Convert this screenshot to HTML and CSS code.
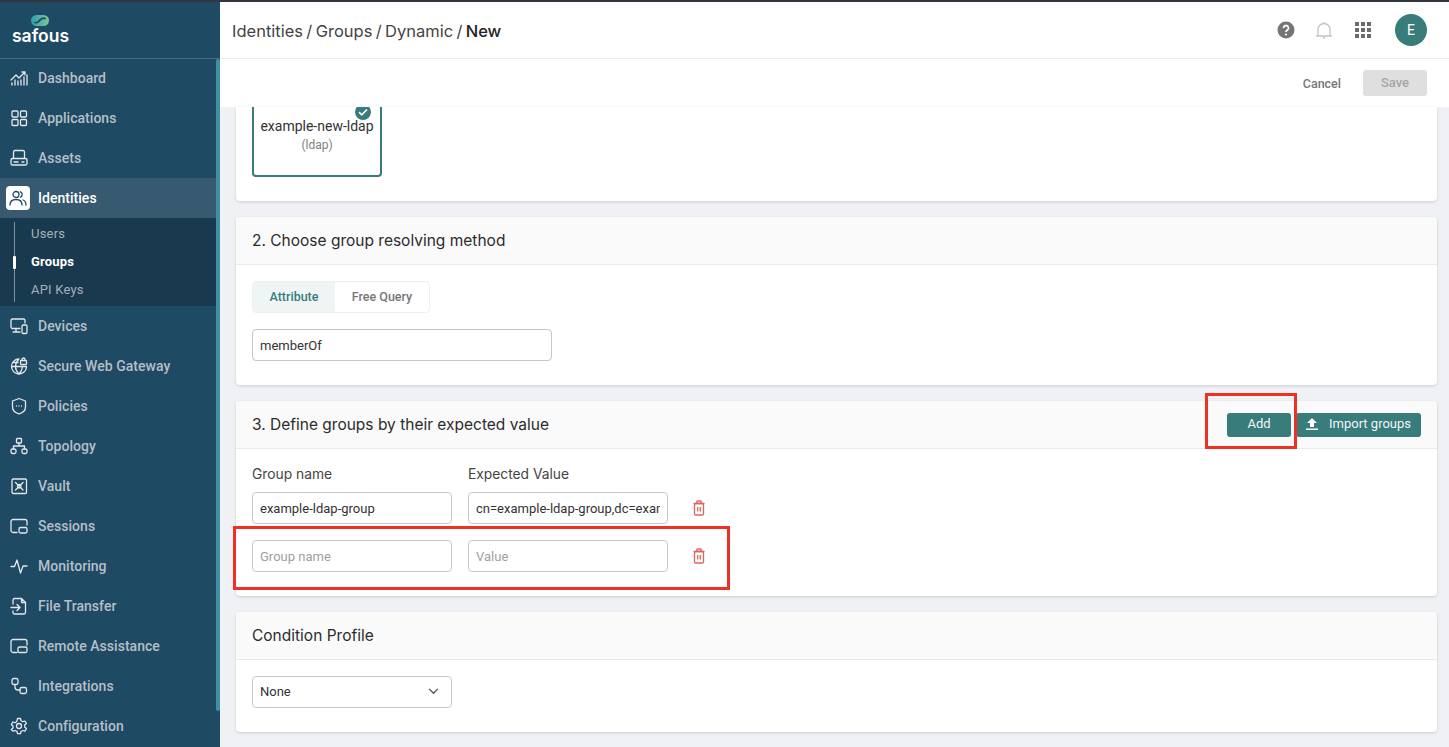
FILE: index.html
```html
<!DOCTYPE html>
<html>
<head>
<title>Identities / Groups / Dynamic / New</title>
<link rel="stylesheet" href="styles.css">
</head>
<body>

<div class="app">
  <aside class="sidebar">
    <div class="logo">
      <svg class="logo-mark" viewBox="0 0 18 11" width="18" height="11">
        <defs>
          <linearGradient id="logo-fill" x1="0" x2="1" y1="0" y2="0">
            <stop offset="0" stop-color="#2f9cb5"/>
            <stop offset="1" stop-color="#7fc88f"/>
          </linearGradient>
        </defs>
        <rect width="18" height="11" rx="5.500" fill="url(#logo-fill)"/>
        <path d="M4 7.500C6.500 8.500 7.500 6.500 9 5S12 2.500 14 3.500" fill="none" stroke="#1f4a63" stroke-width="1.800" stroke-linecap="round"/>
      </svg>
      <span class="logo-text">safous</span>
    </div>
    <div class="nav-wrap">
      <nav class="nav">
        <a class="nav-item">
          <svg class="nav-icon" viewBox="0 0 18 18"><path d="M1 11 6 6l3 3 6-6M15 3h-3M15 3v3M2 16v-2M5 16v-5M8 16v-4M11 16v-5M14 16V8M17 16V6"/></svg>
          Dashboard
        </a>
        <a class="nav-item">
          <svg class="nav-icon" viewBox="0 0 18 18"><rect x="2" y="2" width="6" height="6" rx="1"/><rect x="10.500" y="2" width="6" height="6" rx="1"/><rect x="2" y="10.500" width="6" height="6" rx="1"/><rect x="10.500" y="10.500" width="6" height="6" rx="1"/></svg>
          Applications
        </a>
        <a class="nav-item">
          <svg class="nav-icon" viewBox="0 0 18 18"><path d="M3.500 9V3a1.500 1.500 0 0 1 1.500-1.500h8A1.500 1.500 0 0 1 14.500 3v6"/><rect x="1" y="9.500" width="16" height="6.500" rx="1.500"/><path d="M4 13h4M12 13h2"/></svg>
          Assets
        </a>
        <a class="nav-item active">
          <span class="icon-box">
            <svg class="nav-icon" viewBox="0 0 18 18"><circle cx="7" cy="5.500" r="3"/><path d="M1 16c0-3.500 2.500-5.500 6-5.500s6 2 6 5.500M11.500 2.800a3 3 0 0 1 0 5.400M14 11c2 .6 3 2.500 3 5"/></svg>
          </span>
          Identities
        </a>
        <div class="subnav">
          <a class="sub-item">Users</a>
          <a class="sub-item current">Groups</a>
          <a class="sub-item">API Keys</a>
        </div>
        <a class="nav-item">
          <svg class="nav-icon" viewBox="0 0 18 18"><path d="M10 11.500H2.500A1.500 1.500 0 0 1 1 10V3.500A1.500 1.500 0 0 1 2.500 2h11A1.500 1.500 0 0 1 15 3.500V6M3 15h7M6 11.500V15"/><rect x="12" y="8" width="5" height="8.500" rx="1.200"/></svg>
          Devices
        </a>
        <a class="nav-item">
          <svg class="nav-icon" viewBox="0 0 18 18"><path d="M9 2a7.500 7.500 0 1 0 7.500 8M1.500 9.500h15M9 2C6.500 4.500 5.500 7 5.500 9.500S6.500 14.500 9 17c2-2 3.200-4.500 3.400-7M2.500 5.500H8"/><rect x="10.500" y="3.500" width="6" height="4" rx=".8"/><path d="M12 3.500V2.500a1.500 1.500 0 0 1 3 0v1"/></svg>
          Secure Web Gateway
        </a>
        <a class="nav-item">
          <svg class="nav-icon" viewBox="0 0 18 18"><path d="M9 1.500 15.500 4v6c0 3.500-3 5.800-6.500 6.800C5.500 15.800 2.500 13.500 2.500 10V4Z"/><path d="M6.500 9h.01M9 9h.01M11.500 9h.01"/></svg>
          Policies
        </a>
        <a class="nav-item">
          <svg class="nav-icon" viewBox="0 0 18 18"><rect x="6.500" y="1.500" width="5" height="4.500" rx=".8"/><rect x="1" y="12" width="5" height="4.500" rx="1.500"/><rect x="12" y="12" width="5" height="4.500" rx="1.500"/><path d="M9 6v3M3.500 12V9h11v3"/></svg>
          Topology
        </a>
        <a class="nav-item">
          <svg class="nav-icon" viewBox="0 0 18 18"><rect x="2" y="2" width="14.500" height="14.500" rx="1.200"/><path d="m5.500 5.500 7.500 7.500M13 5.500 5.500 13"/><circle cx="9.250" cy="9.250" r="1.800"/></svg>
          Vault
        </a>
        <a class="nav-item">
          <svg class="nav-icon" viewBox="0 0 18 18"><path d="M7 15.500H3A2 2 0 0 1 1 13.500V4.500A2 2 0 0 1 3 2.500h12A2 2 0 0 1 17 4.500V8"/><rect x="9" y="10.500" width="8" height="5.500" rx="1.500"/></svg>
          Sessions
        </a>
        <a class="nav-item">
          <svg class="nav-icon" viewBox="0 0 18 18"><path d="M1 9.500h3.500L7 3l3.500 13 2.500-7h4"/></svg>
          Monitoring
        </a>
        <a class="nav-item">
          <svg class="nav-icon" viewBox="0 0 18 18"><path d="M3 7V3a1.500 1.500 0 0 1 1.500-1.500h7L15.500 5.500v10A1.500 1.500 0 0 1 14 17H4.500A1.500 1.500 0 0 1 3 15.500V14M11.500 1.500v4h4M1 10.500h9M7 7.500l3 3-3 3"/></svg>
          File Transfer
        </a>
        <a class="nav-item">
          <svg class="nav-icon" viewBox="0 0 18 18"><path d="M7 15.500H3A2 2 0 0 1 1 13.500V4.500A2 2 0 0 1 3 2.500h12A2 2 0 0 1 17 4.500V8"/><rect x="8" y="10" width="9" height="5.500" rx="1.500"/></svg>
          Remote Assistance
        </a>
        <a class="nav-item">
          <svg class="nav-icon" viewBox="0 0 18 18"><rect x="2" y="1.500" width="6" height="6" rx="1.800"/><rect x="10" y="10.500" width="6.500" height="6" rx="1.800"/><path d="M5 7.500V10a3 3 0 0 0 3 3h2"/></svg>
          Integrations
        </a>
        <a class="nav-item">
          <svg class="nav-icon" viewBox="0 0 18 18"><circle cx="9" cy="9" r="2.500"/><path d="M7.500 1.500h3l.5 2.200 1.700 1 2.200-.7 1.500 2.600-1.700 1.500v2l1.700 1.500-1.500 2.600-2.200-.7-1.700 1-.5 2.200h-3l-.5-2.200-1.700-1-2.200.7L1.300 12.600 3 11.100v-2L1.300 7.600l1.500-2.600 2.200.7 1.700-1Z"/></svg>
          Configuration
        </a>
      </nav>
      <div class="nav-scroll"></div>
    </div>
  </aside>

  <div class="main">
    <header class="topbar">
      <div class="crumbs">Identities / Groups / Dynamic / <b>New</b></div>
      <div class="top-icons">
        <svg class="help" viewBox="0 0 18 18" width="18" height="18"><circle cx="9" cy="9" r="8.500" fill="#757575"/><path d="M6.500 7a2.500 2.500 0 1 1 3.900 2.100C9.500 9.700 9 10.100 9 11" fill="none" stroke="#fff" stroke-width="1.800"/><circle cx="9" cy="13.500" r="1.100" fill="#fff"/></svg>
        <svg class="bell" viewBox="0 0 16 18" width="16" height="18"><path d="M2 14V8.500a6 6 0 0 1 12 0V14l1 1H1ZM8 1v1.500" fill="none" stroke="#c4c4c4" stroke-width="1.300"/><circle cx="8" cy="16.800" r="1.100" fill="#c4c4c4"/></svg>
        <div class="apps">
          <i></i><i></i><i></i><i></i><i></i><i></i><i></i><i></i><i></i>
        </div>
        <div class="avatar">E</div>
      </div>
    </header>

    <div class="actions">
      <button class="btn-cancel">Cancel</button>
      <button class="btn-save">Save</button>
    </div>

    <div class="content">
      <section class="card card-clipped">
        <div class="tile">
          <svg class="tile-check" viewBox="0 0 16 16" width="16" height="16"><circle cx="8" cy="8" r="8" fill="#387c7c"/><path d="m4 8.200 2.800 2.600L12 5.500" fill="none" stroke="#fff" stroke-width="1.600"/></svg>
          <div class="tile-name">example-new-ldap</div>
          <div class="tile-type">(ldap)</div>
        </div>
      </section>

      <section class="card">
        <div class="card-head">
          <h3>2. Choose group resolving method</h3>
        </div>
        <div class="card-body">
          <div class="tabs">
            <span class="tab on">Attribute</span>
            <span class="tab">Free Query</span>
          </div>
          <input type="text" class="field wide" value="memberOf">
        </div>
      </section>

      <section class="card">
        <div class="card-head">
          <h3>3. Define groups by their expected value</h3>
          <div class="head-btns">
            <button class="btn-teal add">Add</button>
            <button class="btn-teal import">
              <svg viewBox="0 0 12 12" width="12" height="12"><path d="M6 0 11 5H8v4H4V5H1ZM0 10.500h12V12H0Z" fill="#fff"/></svg>
              Import groups
            </button>
          </div>
        </div>
        <div class="card-body groups">
          <label class="col-label">Group name</label>
          <label class="col-label">Expected Value</label>
          <span></span>
          <input type="text" class="field" value="example-ldap-group">
          <input type="text" class="field" value="cn=example-ldap-group,dc=example,dc=com">
          <svg class="trash" viewBox="0 0 14 16" width="14" height="16"><path d="M1.500 3.500h11M4.800 3.500V1.800a.8.800 0 0 1 .8-.8h2.800a.8.800 0 0 1 .8.8v1.700"/><rect x="2.500" y="3.500" width="9" height="11.500" rx="1.300"/><path d="M5.700 7v4.500M8.300 7v4.500"/></svg>
          <input type="text" class="field" placeholder="Group name">
          <input type="text" class="field" placeholder="Value">
          <svg class="trash" viewBox="0 0 14 16" width="14" height="16"><path d="M1.500 3.500h11M4.800 3.500V1.800a.8.800 0 0 1 .8-.8h2.800a.8.800 0 0 1 .8.8v1.700"/><rect x="2.500" y="3.500" width="9" height="11.500" rx="1.300"/><path d="M5.700 7v4.500M8.300 7v4.500"/></svg>
        </div>
      </section>

      <section class="card">
        <div class="card-head">
          <h3>Condition Profile</h3>
        </div>
        <div class="card-body">
          <div class="field select">
            None
            <svg viewBox="0 0 12 8" width="11" height="7"><path d="m1 1 5 5 5-5" fill="none" stroke="#555" stroke-width="1.500"/></svg>
          </div>
        </div>
      </section>
    </div>
  </div>

  <div class="mark mark-add"></div>
  <div class="mark mark-row"></div>
</div>

</body>
</html>
```

FILE: styles.css
```css
* {
  box-sizing: border-box;
}

html, body {
  margin: 0;
  height: 100%;
  overflow: hidden;
}

body {
  font-family: Roboto, "Liberation Sans", sans-serif;
  color: #333;
}

.app {
  position: relative;
  display: flex;
  height: 747px;
  border-top: 2px solid #33363f;
}

/* sidebar */
.sidebar {
  width: 220px;
  flex: none;
  background: #1f4a63;
}

.logo {
  height: 56px;
  width: 220px;
  padding-top: 13px;
  display: flex;
  flex-direction: column;
  align-items: flex-start;
  color: #fff;
}

.logo-mark {
  margin-left: 31px;
}

.logo-text {
  margin: 0 0 0 12px;
  font-family: Inter, sans-serif;
  font-weight: 600;
  font-size: 17.500px;
  line-height: 20px;
}

.nav-wrap {
  display: flex;
  box-shadow: inset 0 1px #4b6c80;
}

.nav {
  width: 216px;
}

.nav-scroll {
  width: 4px;
  height: 652px;
  margin-top: 1px;
  background: #3f8fa5;
  border-radius: 2px;
}

.nav-item {
  display: flex;
  align-items: center;
  height: 40px;
  padding-left: 10px;
  font-size: 14px;
  font-weight: 500;
  letter-spacing: 0.03px;
  color: #b5bfc6;
}

.nav-icon {
  width: 18px;
  height: 18px;
  margin-right: 10px;
  flex: none;
  fill: none;
  stroke: #e3e8eb;
  stroke-width: 1.300;
  stroke-linecap: round;
  stroke-linejoin: round;
}

.nav-item.active {
  background: #375a70;
  color: #fff;
  padding-left: 6px;
}

.icon-box {
  width: 24px;
  height: 24px;
  margin-right: 8px;
  background: #fff;
  border-radius: 4px;
  display: flex;
  align-items: center;
  justify-content: center;
}

.icon-box .nav-icon {
  margin: 0;
  stroke: #1f4a63;
}

.subnav {
  height: 88px;
  padding: 2px 0 2px 31px;
  background: #19394f;
  position: relative;
}

.subnav::before {
  content: "";
  position: absolute;
  left: 14px;
  top: 4px;
  bottom: 4px;
  width: 1px;
  background: #7d919e;
}

.sub-item {
  display: block;
  height: 28px;
  line-height: 28px;
  font-size: 13px;
  letter-spacing: 0.2px;
  color: #a5b1ba;
  position: relative;
}

.sub-item.current {
  color: #fff;
  font-weight: 700;
}

.sub-item.current::before {
  content: "";
  position: absolute;
  left: -18px;
  top: 8px;
  width: 3px;
  height: 13px;
  background: #fff;
  border-radius: 1px;
}

/* main */
.main {
  flex: 1;
  min-width: 0;
  display: flex;
  flex-direction: column;
  background: #eff1f5;
}

.topbar {
  height: 57px;
  flex: none;
  background: #fff;
  border-bottom: 1px solid #eceaf8;
  display: flex;
  align-items: center;
  justify-content: space-between;
  padding: 0 22px 0 12px;
}

.crumbs {
  padding-top: 1px;
  font-family: Inter, sans-serif;
  font-size: 16.500px;
  word-spacing: -1.300px;
  color: #444;
}

.crumbs b {
  font-weight: 500;
  color: #222;
}

.top-icons {
  display: flex;
  align-items: center;
}

.help {
  margin-right: 21px;
}

.bell {
  margin-right: 23px;
}

.apps {
  display: grid;
  grid-template-columns: repeat(3, 4px);
  grid-auto-rows: 4px;
  gap: 2px;
  width: 16px;
  margin-right: 24px;
}

.apps i {
  background: #6b6b6b;
}

.avatar {
  width: 32px;
  height: 32px;
  border-radius: 50%;
  background: #387c7c;
  color: #fff;
  font-size: 14px;
  display: flex;
  align-items: center;
  justify-content: center;
}

.actions {
  height: 48px;
  flex: none;
  background: #fff;
  display: flex;
  align-items: center;
  justify-content: flex-end;
  padding: 0 22px 0 0;
}

.actions button {
  border: 0;
  font-family: inherit;
  font-weight: 500;
}

.btn-cancel {
  background: none;
  color: #777;
  font-size: 12.500px;
  margin-right: 22px;
  padding: 0;
}

.btn-save {
  width: 64px;
  height: 26px;
  padding: 0 0 2px;
  background: #dfdfdf;
  color: #a6a6a6;
  font-size: 13px;
  border-radius: 3px;
}

.content {
  padding: 0 12px 0 16px;
  display: flex;
  flex-direction: column;
  gap: 16px;
}

.card {
  background: #fff;
  border-radius: 4px;
  box-shadow: 0 1px 3px rgba(0, 0, 0, 0.15);
}

.card-clipped {
  height: 94px;
  flex: none;
  border-radius: 0 0 4px 4px;
  padding-left: 16px;
  overflow: hidden;
}

.tile {
  position: relative;
  width: 130px;
  height: 70px;
  border: 2px solid #387c7c;
  border-top: 0;
  border-radius: 0 0 4px 4px;
  text-align: center;
  padding-top: 11px;
}

.tile-check {
  position: absolute;
  top: -3px;
  right: 9px;
}

.tile-name {
  font-size: 14px;
  line-height: 16px;
  color: #333;
}

.tile-type {
  font-size: 12px;
  line-height: 14px;
  margin-top: 4px;
  color: #808080;
}

.card-head {
  height: 48px;
  padding: 0 16px;
  background: #fafafa;
  border-bottom: 1px solid #e6ebeb;
  border-radius: 4px 4px 0 0;
  display: flex;
  align-items: center;
  justify-content: space-between;
}

.card-head h3 {
  margin: 0;
  font-family: Inter, sans-serif;
  font-weight: 400;
  font-size: 15.500px;
  color: #2c2c2c;
}

.card-body {
  padding: 16px 16px 24px;
}

.tabs {
  display: inline-flex;
  height: 32px;
  margin-bottom: 16px;
  vertical-align: top;
  border: 1px solid #eef0f1;
  border-radius: 4px;
  font-size: 12.500px;
  font-weight: 500;
  color: #777;
}

.tab {
  display: flex;
  align-items: center;
  justify-content: center;
  width: 94px;
  padding-bottom: 2px;
}

.tab.on {
  width: 82px;
  background: #eff4f5;
  color: #387c7c;
}

.field {
  display: block;
  width: 200px;
  height: 32px;
  padding: 0 7px;
  border: 1px solid #c6c6c6;
  border-radius: 4px;
  font-family: inherit;
  font-size: 13px;
  color: #333;
  background: #fff;
  outline: 0;
}

.field::placeholder {
  color: #a0a0a0;
}

.field.wide {
  width: 300px;
}

.select {
  display: flex;
  align-items: center;
  justify-content: space-between;
  padding: 0 12px 2px 7px;
}

.head-btns {
  display: flex;
  gap: 5px;
}

.btn-teal {
  height: 24px;
  border: 0;
  padding: 0 0 2px;
  border-radius: 3px;
  background: #387c7c;
  color: #f2f6f6;
  font-family: inherit;
  font-size: 13px;
  display: flex;
  align-items: center;
  justify-content: center;
}

.add {
  width: 64px;
}

.import {
  width: 125px;
  gap: 11px;
}

.groups {
  display: grid;
  grid-template-columns: 200px 200px 14px;
  column-gap: 16px;
  row-gap: 16px;
  align-items: center;
  padding-top: 17px;
}

.col-label {
  font-family: Inter, sans-serif;
  font-weight: 400;
  font-size: 13.800px;
  line-height: 16px;
  color: #444;
  margin-bottom: -6px;
}

.trash {
  fill: none;
  stroke: #e0625c;
  stroke-width: 1.300;
  margin-left: 8px;
}

/* red annotation boxes drawn over the screenshot */
.mark {
  position: absolute;
  border: 3px solid #ee3124;
}

.mark-add {
  left: 1205px;
  top: 391px;
  width: 92px;
  height: 56px;
}

.mark-row {
  left: 233px;
  top: 524px;
  width: 497px;
  height: 64px;
}
```
